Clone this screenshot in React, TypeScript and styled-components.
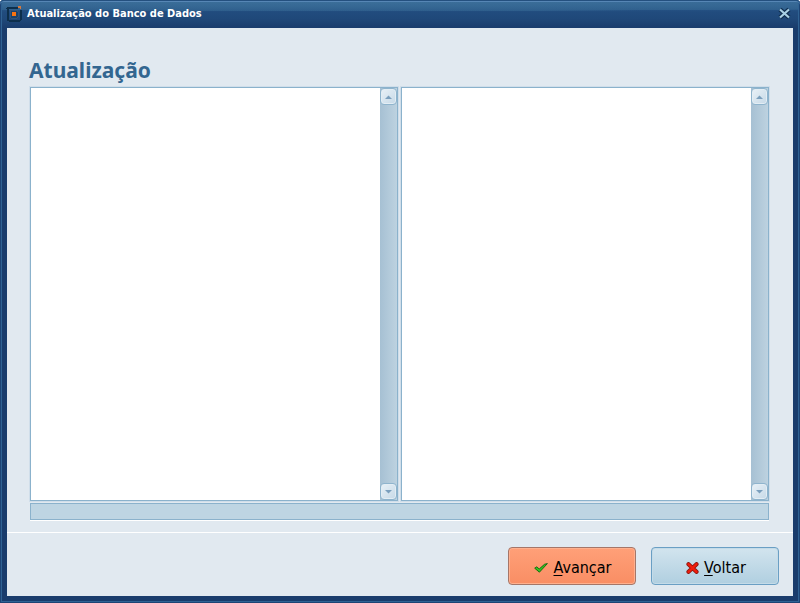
import React from 'react';
import styled, { createGlobalStyle } from 'styled-components';

const uiFont = '"DejaVu Sans Condensed", "DejaVu Sans", sans-serif';

const GlobalStyle = createGlobalStyle`
  *, *::before, *::after { box-sizing: border-box; }
  body { margin: 0; background: #ffffff; }
`;

const Window = styled.main`
  min-height: 100vh;
  display: flex;
  flex-direction: column;
  padding: 0 7px 7px;
  border-radius: 4px 4px 0 0;
  background: #193c6c;
  box-shadow: inset 0 0 0 1px #1d4475, inset 0 0 0 2px #2f6293;
  font-family: ${uiFont};
`;

const TitleBar = styled.header`
  display: flex;
  align-items: center;
  gap: 4px;
  height: 28px;
  margin: 0 -7px;
  padding: 0 8px 2px 6px;
  border-top: 1px solid #24507f;
  border-radius: 4px 4px 0 0;
  box-shadow: inset 0 1px 0 #5686b5, inset 1px 0 0 #1d4475, inset -1px 0 0 #1d4475,
    inset 2px 0 0 #2f6293, inset -2px 0 0 #2f6293;
  background:
    radial-gradient(ellipse 900px 10px at 45% 0, rgba(67, 122, 160, 0.6) 0, rgba(58, 110, 152, 0.5) 97%, transparent 100%),
    linear-gradient(#315f91 0, #2a5889 6px, #214c7e 11px, #1f4879 18px, #193c6c 100%);
`;

const WindowTitle = styled.h1`
  flex: 1;
  margin: 0;
  color: #ffffff;
  font-family: ${uiFont};
  font-size: 11px;
  font-weight: 700;
  line-height: 16px;
`;

const CloseButton = styled.button`
  display: flex;
  padding: 0;
  border: 0;
  background: none;
`;

const Body = styled.section`
  flex: 1;
  display: flex;
  flex-direction: column;
  background: #e1e9f0;
`;

const Content = styled.div`
  flex: 1;
  display: flex;
  flex-direction: column;
  padding: 28px 24px 12px 23px;
`;

const Heading = styled.h2`
  margin: 0 0 3px -1px;
  color: #336690;
  font-family: "Noto Sans", sans-serif;
  font-size: 21px;
  font-weight: 700;
  line-height: 28px;
`;

const Panels = styled.div`
  flex: 1;
  display: grid;
  grid-template-columns: 1fr 1fr;
  gap: 3px;
  margin-bottom: 2px;
`;

const LogPanel = styled.div`
  display: flex;
  border: 1px solid #8bb2cc;
  background: #ffffff;
  box-shadow: 0 0 0 1px #d0deea;
`;

const LogText = styled.textarea`
  flex: 1;
  min-width: 0;
  padding: 2px 4px;
  border: 0;
  outline: 0;
  resize: none;
  overflow: hidden;
  background: #ffffff;
  font: 12px/16px ${uiFont};
`;

const ScrollBar = styled.div`
  display: flex;
  flex-direction: column;
  justify-content: space-between;
  width: 17px;
  background: linear-gradient(90deg, #a6c0d3, #bdd2e0);
`;

const ScrollButton = styled.button`
  display: flex;
  align-items: center;
  justify-content: center;
  width: 17px;
  height: 17px;
  padding: 0;
  border: 1px solid #8fb4cd;
  border-radius: 4px;
  background: linear-gradient(135deg, #e9f1f7, #c6d9e7);
  box-shadow: inset 0 0 0 1px #e3edf4;
`;

const Progress = styled.progress`
  display: block;
  width: 100%;
  height: 17px;
  appearance: none;
  border: 1px solid #8bb2cc;
  background: #bed5e3;
  box-shadow: 0 1px 0 #ffffff;
  &::-webkit-progress-bar { background: #bed5e3; }
  &::-webkit-progress-value { background: #6fa3c4; }
`;

const Actions = styled.footer`
  display: flex;
  justify-content: flex-end;
  gap: 15px;
  padding: 14px 14px 11px;
  border-top: 1px solid #ffffff;
`;

const ActionButton = styled.button<{ $primary?: boolean }>`
  display: flex;
  align-items: center;
  justify-content: center;
  gap: 5px;
  width: 128px;
  height: 38px;
  padding: 3px 0 0 2px;
  border: 1px solid ${(p) => (p.$primary ? '#a57668' : '#6a9fc4')};
  border-radius: 4px;
  background: ${(p) =>
    p.$primary ? 'linear-gradient(#ffa078, #f98e64)' : 'linear-gradient(#d2e4ee, #b0cfe0)'};
  box-shadow: inset 0 0 0 1px ${(p) => (p.$primary ? '#ffb08e' : '#c4dbe8')};
  color: #000000;
  font-family: ${uiFont};
  font-size: 16px;
  line-height: 20px;
`;

const AccessKey = styled.span`
  text-decoration: underline;
  text-decoration-thickness: 1px;
  text-underline-offset: 2px;
`;

const AppIcon = () => (
  <svg width="17" height="17" viewBox="0 0 17 17" shapeRendering="crispEdges" aria-hidden="true">
    <path d="M12 2.5H2.5Q1.5 2.5 1.5 3.5V14.5Q1.5 15.5 2.5 15.5H13.5Q14.5 15.5 14.5 14.5V5" fill="none" stroke="#0d2f4c" strokeWidth="2" />
    <path d="M11 5.5H5L4 7V12L5 13H11L12 12V7Z" fill="#1b426c" stroke="#31547a" />
    <rect x="6" y="7" width="4" height="4" fill="#f97312" />
    <path d="M12 1H15V4H14L13 3H12Z" fill="#d7793b" />
  </svg>
);

const CloseIcon = () => (
  <svg width="15" height="15" viewBox="0 0 15 15" aria-hidden="true">
    <path d="M3 3.5 12 11.5M12 3.5 3 11.5" stroke="#112f50" strokeWidth="4.5" />
    <path d="M3 3.5 12 11.5M12 3.5 3 11.5" stroke="#a8d0e5" strokeWidth="2.2" />
  </svg>
);

const ArrowIcon = ({ down }: { down?: boolean }) => (
  <svg width="7" height="4" viewBox="0 0 7 4" aria-hidden="true">
    <path d={down ? 'M0 0H7L3.5 3.5Z' : 'M0 4H7L3.5 .5Z'} fill="#7b9fbd" />
  </svg>
);

const CheckIcon = () => (
  <svg width="14" height="10" viewBox="0 0 14 10" aria-hidden="true">
    <path d="M.7 5.2 2.8 3.8 5.2 6 10.5 1.3 13.4 .6 5.4 9.2Z" fill="#32c51e" stroke="#176b12" strokeWidth="1" />
  </svg>
);

const CrossIcon = () => (
  <svg width="13" height="12" viewBox="0 0 13 12" aria-hidden="true">
    <path d="M2.5 2.2 10.5 9.8M10.5 2.2 2.5 9.8" stroke="#8f1710" strokeWidth="4.2" strokeLinecap="round" />
    <path d="M2.5 2.2 10.5 9.8M10.5 2.2 2.5 9.8" stroke="#f01d0c" strokeWidth="2.4" strokeLinecap="round" />
  </svg>
);

const Log = ({ label }: { label: string }) => (
  <LogPanel>
    <LogText aria-label={label} readOnly />
    <ScrollBar>
      <ScrollButton type="button" aria-label="Rolar para cima">
        <ArrowIcon />
      </ScrollButton>
      <ScrollButton type="button" aria-label="Rolar para baixo">
        <ArrowIcon down />
      </ScrollButton>
    </ScrollBar>
  </LogPanel>
);

export default function App() {
  return (
    <>
      <GlobalStyle />
      <Window>
        <TitleBar>
          <AppIcon />
          <WindowTitle>Atualização do Banco de Dados</WindowTitle>
          <CloseButton type="button" aria-label="Fechar">
            <CloseIcon />
          </CloseButton>
        </TitleBar>
        <Body>
          <Content>
            <Heading>Atualização</Heading>
            <Panels>
              <Log label="Etapas da atualização" />
              <Log label="Detalhes da atualização" />
            </Panels>
            <Progress aria-label="Progresso da atualização" value={0} max={100} />
          </Content>
          <Actions>
            <ActionButton type="button" $primary>
              <CheckIcon />
              <span><AccessKey>A</AccessKey>vançar</span>
            </ActionButton>
            <ActionButton type="button">
              <CrossIcon />
              <span><AccessKey>V</AccessKey>oltar</span>
            </ActionButton>
          </Actions>
        </Body>
      </Window>
    </>
  );
}
